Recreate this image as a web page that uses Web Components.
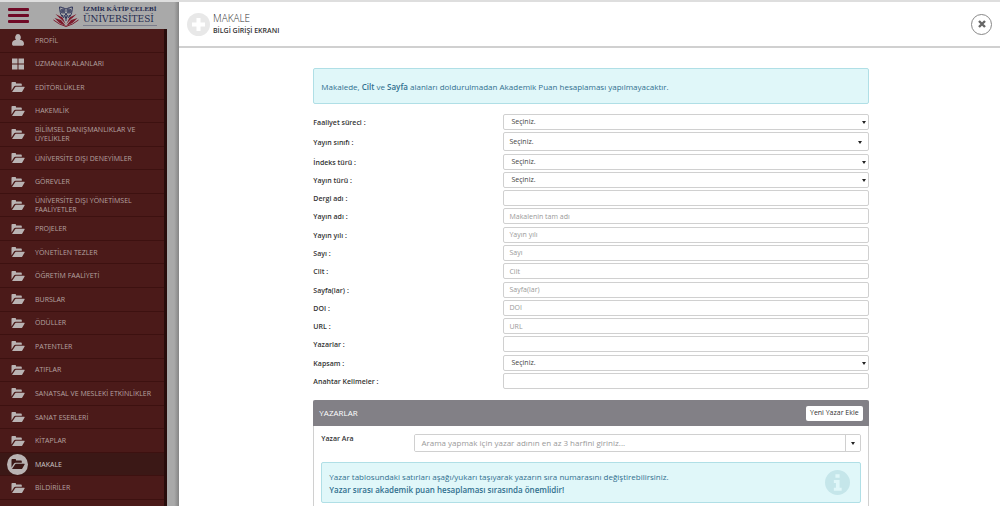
<!DOCTYPE html>
<html lang="tr">
<head>
<meta charset="utf-8">
<meta name="viewport" content="width=device-width, initial-scale=1">
<title>Makale - Bilgi Girişi Ekranı</title>
<style>
  html, body { margin: 0; height: 100%; }
  body { font-family: "Open Sans", "Noto Sans", sans-serif; font-size: 8px; line-height: 10px; color: #333; background: #ececec; overflow: hidden; }
</style>
</head>
<body>
<app-shell>
  <side-bar slot="side">
    <university-logo slot="logo"></university-logo>
    <nav-item icon="user">PROFİL</nav-item>
    <nav-item icon="grid">UZMANLIK ALANLARI</nav-item>
    <nav-item>EDİTÖRLÜKLER</nav-item>
    <nav-item>HAKEMLİK</nav-item>
    <nav-item>BİLİMSEL DANIŞMANLIKLAR VE ÜYELİKLER</nav-item>
    <nav-item>ÜNİVERSİTE DIŞI DENEYİMLER</nav-item>
    <nav-item>GÖREVLER</nav-item>
    <nav-item>ÜNİVERSİTE DIŞI YÖNETİMSEL FAALİYETLER</nav-item>
    <nav-item>PROJELER</nav-item>
    <nav-item>YÖNETİLEN TEZLER</nav-item>
    <nav-item>ÖĞRETİM FAALİYETİ</nav-item>
    <nav-item>BURSLAR</nav-item>
    <nav-item>ÖDÜLLER</nav-item>
    <nav-item>PATENTLER</nav-item>
    <nav-item>ATIFLAR</nav-item>
    <nav-item>SANATSAL VE MESLEKİ ETKİNLİKLER</nav-item>
    <nav-item>SANAT ESERLERİ</nav-item>
    <nav-item>KİTAPLAR</nav-item>
    <nav-item active>MAKALE</nav-item>
    <nav-item>BİLDİRİLER</nav-item>
  </side-bar>
  <entry-dialog>
    <span slot="title">MAKALE</span>
    <span slot="subtitle">BİLGİ GİRİŞİ EKRANI</span>
    <info-note>Makalede, <b>Cilt</b> ve <b>Sayfa</b> alanları doldurulmadan Akademik Puan hesaplaması yapılmayacaktır.</info-note>
    <field-list>
      <form-field type="select" label="Faaliyet süreci :"></form-field>
      <form-field type="picker" label="Yayın sınıfı :"></form-field>
      <form-field type="select" label="İndeks türü :"></form-field>
      <form-field type="select" label="Yayın türü :"></form-field>
      <form-field label="Dergi adı :"></form-field>
      <form-field label="Yayın adı :" hint="Makalenin tam adı"></form-field>
      <form-field label="Yayın yılı :" hint="Yayın yılı"></form-field>
      <form-field label="Sayı :" hint="Sayı"></form-field>
      <form-field label="Cilt :" hint="Cilt"></form-field>
      <form-field label="Sayfa(lar) :" hint="Sayfa(lar)"></form-field>
      <form-field label="DOI :" hint="DOI"></form-field>
      <form-field label="URL :" hint="URL"></form-field>
      <form-field label="Yazarlar :"></form-field>
      <form-field type="select" label="Kapsam :"></form-field>
      <form-field label="Anahtar Kelimeler :"></form-field>
    </field-list>
    <author-panel>
      <info-note icon>Yazar tablosundaki satırları aşağı/yukarı taşıyarak yazarın sıra numarasını değiştirebilirsiniz.<br><b>Yazar sırası akademik puan hesaplaması sırasında önemlidir!</b></info-note>
    </author-panel>
  </entry-dialog>
</app-shell>

<script>
class Base extends HTMLElement {
  connectedCallback() {
    if (this.shadowRoot) return;
    this.attachShadow({ mode: 'open' }).innerHTML =
      '<style>*{box-sizing:border-box} button,input,select{font:inherit;color:inherit;margin:0}</style>' + this.render();
  }
}

customElements.define('app-shell', class extends Base {
  render() { return `
    <style>
      :host { display: grid; grid-template-columns: 167px 12px minmax(0, 1fr); height: 100vh; box-sizing: border-box; border-top: 2px solid #dedede; }
      .gutter { background: linear-gradient(90deg, #a9a9a9 60%, #858585); }
    </style>
    <slot name="side"></slot><div class="gutter"></div><slot></slot>`; }
});

customElements.define('side-bar', class extends Base {
  render() { return `
    <style>
      :host { display: flex; flex-direction: column; min-height: 0; background: #a9a9a9; }
      header { display: flex; align-items: center; gap: 24px; height: 27px; padding-left: 8px; }
      .menu { width: 21px; height: 15px; padding: 0; border: 0; background: none; display: flex; flex-direction: column; justify-content: space-between; }
      .menu i { height: 3px; border-radius: 1px; background: #6f0a26; }
      nav { flex: 1; display: flex; flex-direction: column; background: #4b1a19; border-right: 3px solid #280c0b; padding-bottom: 6px; }
    </style>
    <header>
      <button class="menu" aria-label="Menü"><i></i><i></i><i></i></button>
      <slot name="logo"></slot>
    </header>
    <nav><slot></slot></nav>`; }
});

customElements.define('university-logo', class extends Base {
  render() { return `
    <style>
      :host { display: flex; align-items: center; gap: 4px; color: #23294f; font-family: "Liberation Serif", serif; white-space: nowrap; }
      svg { width: 26px; height: 22px; }
      .name { display: flex; flex-direction: column; border-bottom: 1px solid #7b7d8c; }
      .name b { font-size: 7px; line-height: 9px; }
      .name span { font-family: "DejaVu Serif", serif; font-size: 9px; line-height: 11px; }
    </style>
    <svg viewBox="0 0 52 44" aria-hidden="true">
      <g fill="none" stroke="#2b3158" stroke-width="2">
        <path d="M13 4c4 0 8 2 13 4 5-2 9-4 13-4-1 8-1 14-6 20M13 4c1 8 1 14 6 20"/>
        <circle cx="20" cy="12" r="4"/><circle cx="32" cy="12" r="4"/>
        <path d="M24 16l2 5 2-5M18 20l4 6M34 20l-4 6M22 20l4 7 4-7M26 22v10"/>
      </g>
      <g fill="#2b3158"><circle cx="20" cy="12" r="2"/><circle cx="32" cy="12" r="2"/></g>
      <path fill="#7d1a2c" d="M26 42 16 30 3 26l10 10zM26 42l10-12 13-4-10 10z"/>
      <path fill="#7d1a2c" d="M25 38 19 25 5 18l10 10zM27 38l6-13 14-7-10 10z"/>
      <path fill="none" stroke="#a9a9a9" stroke-width="1" d="M26 41 17 29 4 22M26 41l9-12 13-7"/>
      <path fill="none" stroke="#7d1a2c" stroke-width="2" d="M1 30l12 8 13 5 13-5 12-8"/>
    </svg>
    <div class="name"><b>İZMİR KÂTİP ÇELEBİ</b><span>ÜNİVERSİTESİ</span></div>`; }
});

const ICONS = {
  user: '<svg viewBox="0 0 14 14"><path d="M7 1a3 3.400 0 0 1 2 5.800c2.600.4 4 1.800 4 4.200 0 1.200-.7 1.800-1.800 1.800H2.800C1.700 12.800 1 12.200 1 11c0-2.400 1.400-3.800 4-4.200A3 3.400 0 0 1 7 1z"/></svg>',
  grid: '<svg viewBox="0 0 14 14"><path d="M1 1.500h5.500V6.500H1zM7.500 1.500H13V6.500H7.500zM1 7.500h5.500V12.500H1zM7.500 7.500H13V12.500H7.500z"/></svg>',
  folder: '<svg viewBox="0 0 14 14"><path d="M.5 10.500V2.800Q.5 2 1.300 2h3q.7 0 .7.800v.7h5q.8 0 .8.800v1.500H4.600q-1 0-1.600.8z"/><path d="M1 12l3-4.600q.3-.6 1-.6h8.200q.8 0 .4.700l-2.300 3.900q-.4.600-1 .6z"/></svg>'
};
customElements.define('nav-item', class extends Base {
  render() {
    const icon = this.getAttribute('icon') || 'folder';
    return `
    <style>
      :host { display: block; flex: 1 1 0; min-height: 20px; box-sizing: border-box; border-bottom: 1px solid #3d1110; color: #b5a2a1; line-height: 9px; font-size: 7px; font-weight: 400; }
      :host([active]) { background: #3b1816; color: #cdc6c5; }
      a { display: grid; grid-template-columns: 21px 1fr; gap: 7px; align-items: center; height: 100%; padding: 0 10px 0 7px; color: inherit; text-decoration: none; }
      .icon { display: grid; place-items: center; width: 21px; height: 21px; border-radius: 50%; fill: #b9b3b3; }
      svg { width: 14px; height: 14px; }
      :host([active]) .icon { background: #b9b3b3; fill: #3b1816; }
    </style>
    <a href="#"><span class="icon">${ICONS[icon]}</span><span><slot></slot></span></a>`; }
});

customElements.define('entry-dialog', class extends Base {
  render() { return `
    <style>
      :host { display: flex; flex-direction: column; min-width: 0; min-height: 0; background: #fff; }
      header { display: flex; align-items: center; gap: 3px; padding: 0 8px; min-height: 46px; border-bottom: 2px solid #d0d0d0; }
      .plus { width: 23px; height: 23px; }
      .titles { flex: 1; display: flex; flex-direction: column; color: #333; }
      .titles h1 { margin: 0; font-weight: 300; font-size: 10px; line-height: 13px; }
      .titles h2 { margin: 0; font-weight: 600; font-size: 7px; line-height: 11px; }
      .close { display: grid; place-items: center; width: 21px; height: 21px; padding: 0; border: 1px solid #888; border-radius: 50%; background: #fff; }
      .close svg { width: 8px; height: 8px; }
      main { flex: 1; min-height: 0; overflow-y: auto; scrollbar-width: none; padding: 20px 16% 20px; margin-left: 3px; }
    </style>
    <header>
      <svg class="plus" viewBox="0 0 23 23" aria-hidden="true"><circle cx="11.500" cy="11.500" r="11.500" fill="#e8e8e8"/><path fill="#fff" d="M9.500 5h4v4.500H18v4h-4.500V18h-4v-4.500H5v-4h4.500z"/></svg>
      <div class="titles"><h1><slot name="title"></slot></h1><h2><slot name="subtitle"></slot></h2></div>
      <button class="close" aria-label="Kapat"><svg viewBox="0 0 8 8"><path stroke="#666" stroke-width="2.400" d="M1 1l6 6M7 1 1 7"/></svg></button>
    </header>
    <main><slot></slot></main>`; }
});

customElements.define('info-note', class extends Base {
  render() {
    const badge = this.hasAttribute('icon')
      ? '<svg viewBox="0 0 24 24" aria-hidden="true"><circle cx="12" cy="12" r="12" fill="#c5e6ea"/><path fill="#e0f7f9" d="M10 4h4v3.500h-4zM8.500 9.500H14V17h2v3H8.500v-3h2v-4.500h-2z"/></svg>' : '';
    return `
    <style>
      :host { display: flex; align-items: center; justify-content: space-between; box-sizing: border-box; min-height: 36px; padding: 6px 10px 6px 7px; border: 1px solid #b0dfe6; border-radius: 2px; background: #e0f7f9; color: #31708f; line-height: 13px; }
      :host([icon]) { min-height: 41px; }
      svg { width: 25px; height: 25px; flex: none; }
      ::slotted(b) { font-weight: 600; }
    </style>
    <div><slot></slot></div>${badge}`; }
});

customElements.define('field-list', class extends Base {
  render() { return `
    <style>
      :host { display: flex; flex-direction: column; justify-content: space-between; min-height: 275px; margin: 10px 0 11px; }
    </style><slot></slot>`; }
});

customElements.define('form-field', class extends Base {
  render() {
    const type = this.getAttribute('type');
    const label = this.getAttribute('label');
    const hint = this.getAttribute('hint') || '';
    const control = type
      ? `<span class="wrap ${type}"><select id="c"><option>Seçiniz.</option></select></span>`
      : `<input id="c" type="text" placeholder="${hint}">`;
    return `
    <style>
      :host { display: grid; grid-template-columns: minmax(0, 190fr) minmax(0, 365fr); align-items: center; }
      label { font-weight: 600; font-size: 7px; line-height: 10px; padding-top: 2px; }
      input, select { display: block; width: 100%; height: 16px; padding: 0 5px; border: 1px solid #d0d0d0; border-radius: 2px; background: #fff; font-size: 7px; line-height: 10px; color: #444; }
      input::placeholder { color: #999; opacity: 1; }
      select { appearance: none; padding: 0 7px; }
      .wrap { position: relative; display: block; }
      .wrap::after { content: ""; position: absolute; right: 3px; top: 50%; margin-top: -1px; border: 2px solid transparent; border-top: 3px solid #222; border-bottom: 0; pointer-events: none; }
      .picker select { height: 19px; padding: 0 5px; }
      .picker::after { right: 7px; }
    </style>
    <label for="c">${label}</label>${control}`; }
});

customElements.define('author-panel', class extends Base {
  render() { return `
    <style>
      :host { display: block; border: 1px solid #d0d0d0; border-top: 0; border-radius: 2px; }
      header { display: flex; align-items: center; justify-content: space-between; margin: 0 -1px; min-height: 26px; padding: 0 6px; border-radius: 2px 2px 0 0; background: #828086; color: #fff; }
      h3 { margin: 0; font-weight: 400; font-size: 8px; line-height: 12px; }
      header button { height: 15px; padding: 0 4px; border: 0; border-radius: 2px; background: #fff; color: #333; font-size: 7px; line-height: 10px; }
      .body { padding: 8px 7px 40px; }
      .row { display: grid; grid-template-columns: minmax(0, 93fr) minmax(0, 446fr); margin-bottom: 10px; }
      label { font-weight: 600; font-size: 7px; }
      .combo { display: flex; height: 18px; border: 1px solid #d0d0d0; border-radius: 2px; overflow: hidden; }
      .combo input { flex: 1; min-width: 0; padding: 0 6px; border: 0; font-size: 8px; }
      .combo input::placeholder { color: #999; opacity: 1; }
      .combo button { display: grid; place-items: center; width: 15px; padding: 0; border: 0; border-left: 1px solid #d0d0d0; background: #fff; }
      .combo button i { border: 2px solid transparent; border-top: 3px solid #222; border-bottom: 0; }
    </style>
    <header><h3>YAZARLAR</h3><button>Yeni Yazar Ekle</button></header>
    <div class="body">
      <div class="row">
        <label for="q">Yazar Ara</label>
        <div class="combo"><input id="q" type="text" placeholder="Arama yapmak için yazar adının en az 3 harfini giriniz..."><button aria-label="Listeyi aç"><i></i></button></div>
      </div>
      <slot></slot>
    </div>`; }
});
</script>
</body>
</html>
